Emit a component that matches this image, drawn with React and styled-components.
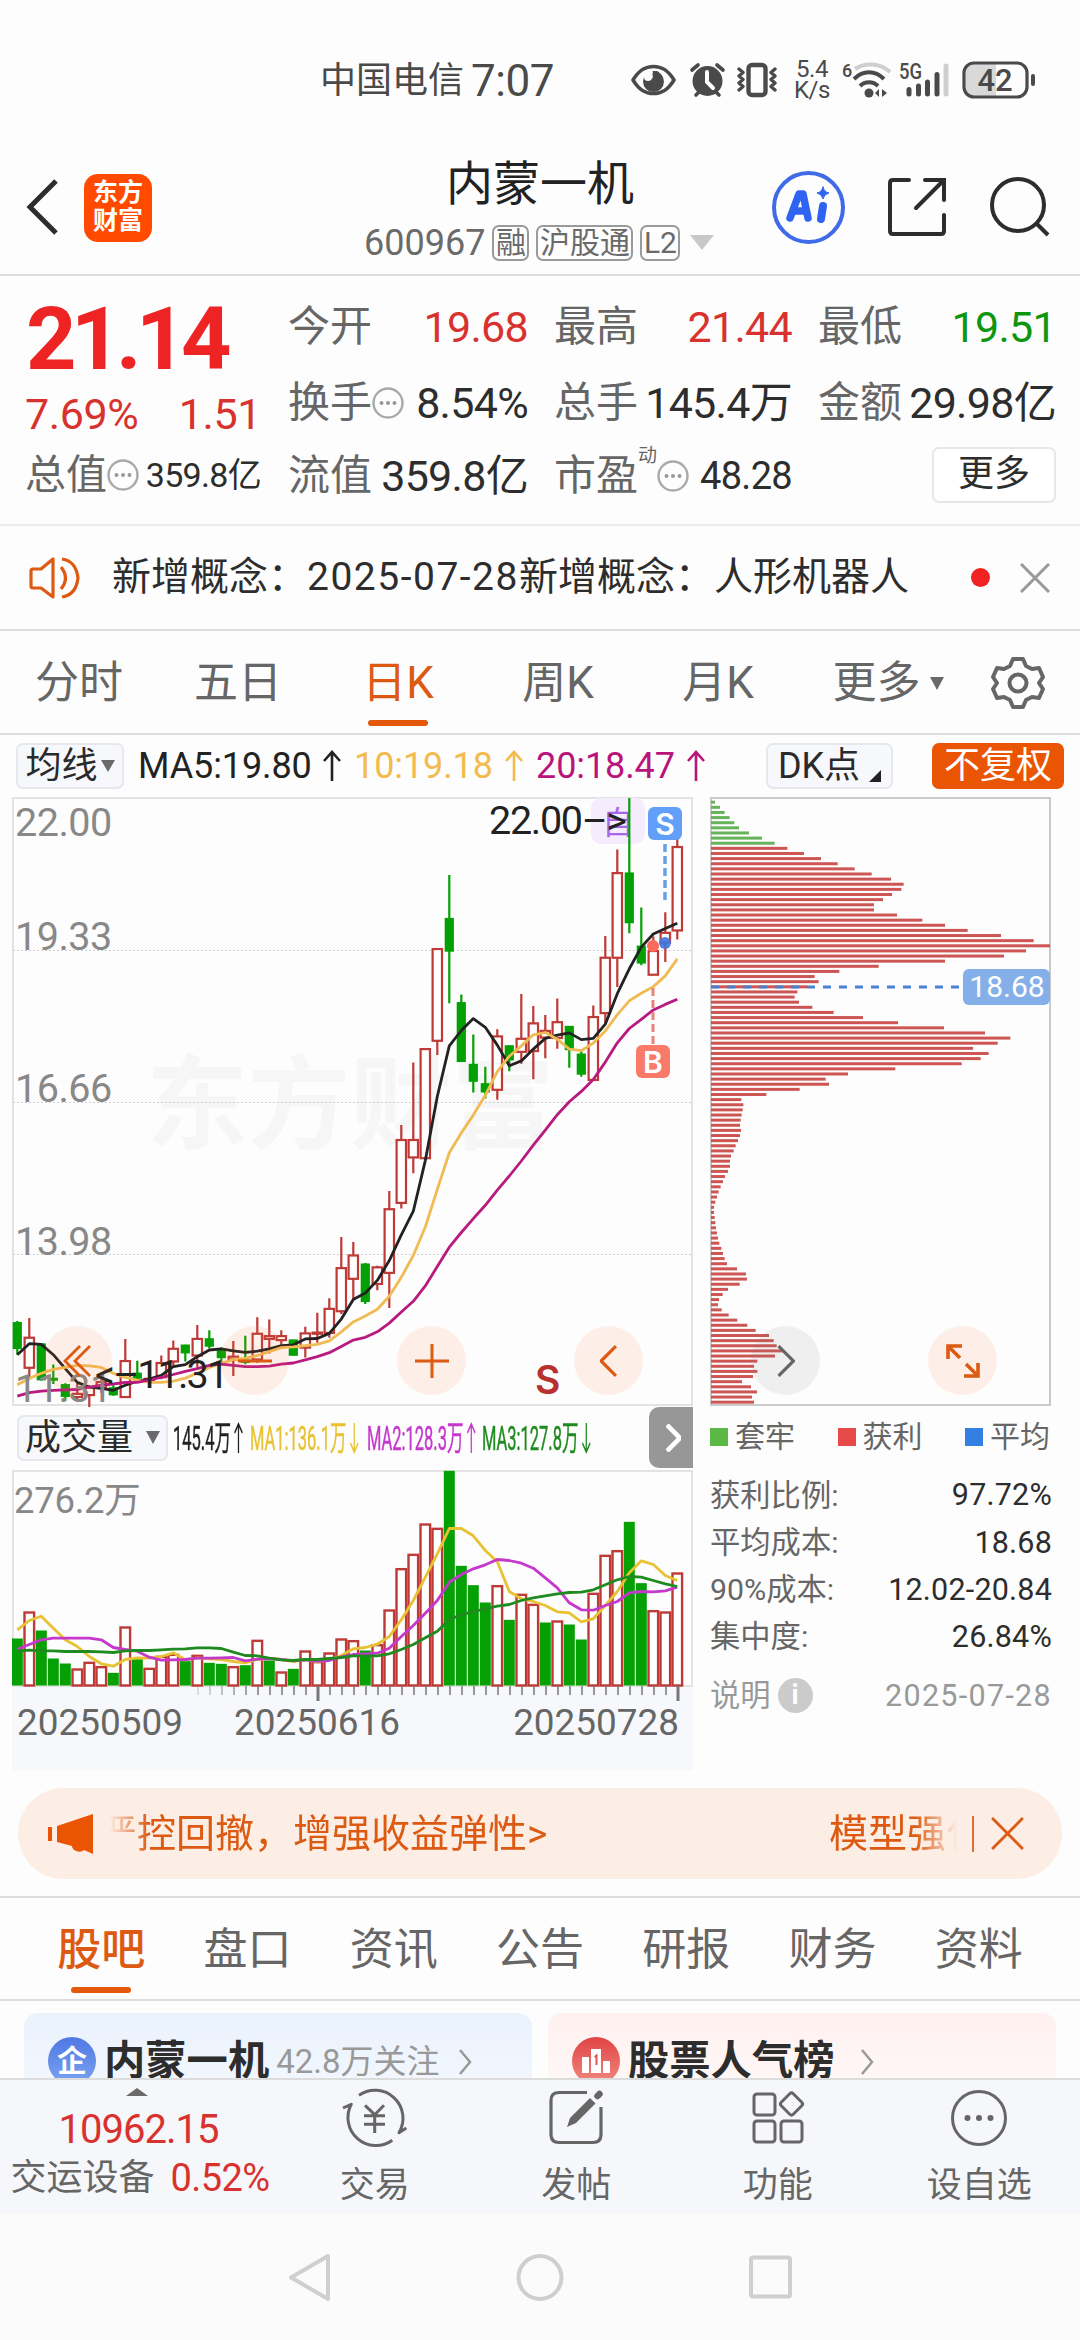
import styled, { createGlobalStyle, css } from 'styled-components';

const GlobalStyle = createGlobalStyle`
  * {
    box-sizing: border-box;
  }

  body {
    margin: 0;
    background: #fdfdfd;
    color: #2d2d2d;
    font-family: Roboto, 'Noto Sans CJK SC', sans-serif;
    line-height: 1;
  }

  svg {
    display: block;
    flex-shrink: 0;
  }
`;

const RED = '#d8322f';
const CANDLE_RED = '#bd3a37';
const GREEN = '#04a004';
const ORANGE = '#dc5a12';

/* ---------- chart data ---------- */

// [direction, high, body top, body bottom, low]
const candles = [
  ['g', 1343, 1348, 1411, 1428], ['r', 1335, 1385, 1461, 1490], ['g', 1402, 1402, 1490, 1494],
  ['g', 1453, 1489, 1491, 1502], ['g', 1500, 1505, 1532, 1545], ['r', 1500, 1527, 1535, 1545],
  ['r', 1505, 1510, 1530, 1560], ['r', 1490, 1497, 1512, 1525], ['g', 1505, 1513, 1528, 1532],
  ['r', 1388, 1444, 1535, 1537], ['g', 1443, 1476, 1486, 1490], ['r', 1475, 1489, 1492, 1510],
  ['r', 1430, 1449, 1485, 1490], ['r', 1392, 1413, 1445, 1455], ['g', 1403, 1405, 1422, 1445],
  ['r', 1353, 1388, 1430, 1460], ['g', 1366, 1389, 1405, 1412], ['g', 1410, 1418, 1434, 1450],
  ['r', 1393, 1433, 1440, 1482], ['g', 1380, 1443, 1446, 1452], ['r', 1333, 1375, 1440, 1448],
  ['r', 1339, 1381, 1388, 1425], ['r', 1366, 1381, 1391, 1405], ['g', 1390, 1392, 1428, 1430],
  ['r', 1357, 1374, 1410, 1435], ['r', 1322, 1372, 1375, 1398], ['r', 1285, 1312, 1373, 1385],
  ['r', 1130, 1209, 1318, 1325], ['r', 1143, 1177, 1236, 1288], ['g', 1196, 1200, 1292, 1300],
  ['r', 1203, 1207, 1249, 1265], ['r', 1014, 1060, 1221, 1310], ['r', 847, 885, 1044, 1058],
  ['r', 689, 885, 929, 969], ['r', 655, 655, 931, 931], ['r', 402, 402, 634, 670],
  ['g', 215, 326, 406, 539], ['g', 517, 539, 685, 687], ['g', 618, 695, 735, 765],
  ['g', 700, 744, 762, 780], ['r', 605, 623, 758, 783], ['g', 646, 648, 681, 711],
  ['r', 516, 629, 662, 692], ['r', 546, 590, 660, 731], ['r', 569, 609, 626, 678],
  ['r', 527, 587, 627, 654], ['g', 597, 599, 655, 702], ['g', 655, 669, 717, 725],
  ['r', 545, 574, 733, 735], ['r', 369, 424, 564, 590], ['r', 150, 210, 424, 498],
  ['g', 20, 211, 334, 362], ['g', 297, 396, 436, 443], ['r', 370, 407, 467, 467],
  ['r', 309, 361, 386, 435], ['r', 105, 144, 355, 378],
];

const ma5 = [
  1428, 1400, 1402, 1428, 1463, 1498, 1510, 1513, 1518, 1505, 1495, 1490, 1480, 1458, 1453, 1433,
  1416, 1413, 1418, 1422, 1419, 1413, 1405, 1403, 1388, 1387, 1374, 1338, 1288, 1272, 1240, 1190,
  1125, 1065, 937, 775, 647, 608, 578, 600, 645, 697, 685, 655, 628, 620, 614, 631, 628, 592, 515,
  452, 397, 364, 350, 337,
];
const ma10 = [
  1504, 1488, 1475, 1465, 1460, 1455, 1456, 1460, 1475, 1485, 1492, 1498, 1498, 1495, 1487, 1475,
  1460, 1450, 1440, 1437, 1430, 1420, 1410, 1408, 1405, 1402, 1393, 1370, 1345, 1330, 1313, 1280,
  1232, 1177, 1105, 1010, 917, 867, 822, 772, 712, 673, 647, 619, 613, 630, 655, 659, 640, 609,
  568, 533, 514, 497, 470, 427,
];
const ma20 = [
  1533, 1524, 1520, 1518, 1517, 1516, 1510, 1505, 1502, 1498, 1498, 1492, 1485, 1478, 1470, 1463,
  1455, 1452, 1455, 1458, 1458, 1457, 1452, 1449, 1441, 1433, 1423, 1407, 1391, 1384, 1370, 1348,
  1320, 1293, 1254, 1205, 1156, 1119, 1084, 1050, 1012, 976, 938, 898, 860, 821, 788, 762, 732,
  688, 639, 603, 580, 556, 542, 529,
];

// bar tops, negative = falling day
const volumes = [
  -714, 633, -690, -774, -789, 804, 784, 797, -817, 678, -776, 802, 766, 760, -782, 763, -787,
  -790, 797, -794, 718, -780, 813, -805, 750, 782, 756, 714, 719, -750, 731, 627, 503, 460, 369,
  382, -211, -496, -554, -606, 554, -658, 580, 610, -666, 660, -672, -717, 577, 463, 449, -364,
  -548, 629, 633, 516,
];
const vma1 = [
  688, 660, 647, 683, 718, 738, 768, 790, 797, 777, 772, 773, 768, 757, 778, 772, 775, 777, 783,
  787, 777, 774, 777, 783, 777, 783, 777, 765, 745, 741, 731, 708, 658, 600, 530, 460, 384, 384,
  406, 450, 484, 573, 595, 603, 615, 634, 637, 664, 655, 615, 573, 517, 481, 492, 525, 540,
];
const vma2 = [
  746, 732, 718, 713, 713, 713, 713, 718, 741, 747, 752, 770, 779, 778, 777, 773, 773, 772, 771,
  781, 776, 774, 777, 781, 778, 782, 780, 769, 762, 760, 758, 743, 708, 675, 638, 600, 545, 522,
  505, 493, 477, 480, 488, 503, 532, 562, 607, 628, 629, 615, 603, 577, 573, 574, 571, 560,
];
const vma3 = [
  752, 749, 751, 751, 753, 753, 753, 754, 756, 751, 750, 750, 748, 746, 745, 742, 742, 744, 755,
  765, 766, 773, 778, 780, 777, 777, 774, 771, 766, 766, 766, 760, 747, 732, 712, 692, 657, 643,
  633, 625, 617, 612, 600, 592, 586, 580, 576, 575, 568, 553, 538, 528, 530, 540, 550, 558,
];

const chips = [
  12, 27, 41, 56, 70, 84, 114, 153, 191, 229, 279, 330, 380, 431, 482, 540, 578, 571, 543, 516,
  489, 489, 558, 634, 702, 770, 870, 968, 1017, 945, 879, 702, 503, 385, 311, 323, 289, 259, 251,
  264, 304, 368, 456, 561, 699, 822, 898, 860, 786, 833, 809, 752, 553, 411, 344, 354, 266, 166,
  91, 97, 95, 92, 89, 87, 90, 87, 81, 74, 68, 60, 57, 57, 51, 42, 36, 29, 23, 18, 13, 9, 9, 11,
  13, 15, 18, 21, 25, 31, 36, 41, 48, 78, 105, 108, 86, 51, 35, 24, 21, 32, 53, 79, 109, 134, 174,
  188, 197, 215, 192, 139, 129, 139, 126, 93, 120, 138, 123, 129,
];

const xAt = (i) => 5.3 + i * 12;
const priceY = (v) => (v - 20) * 0.3954 + 1;
const volY = (v) => (v - 210) / 3 + 0.5;
const line = (values, y) => values.map((v, i) => `${xAt(i)},${y(v).toFixed(1)}`).join(' ');

/* ---------- status bar ---------- */

const Page = styled.div`
  width: 1080px;
  height: 2340px;
  overflow: hidden;
  display: flex;
  flex-direction: column;
  background: #fdfdfd;
`;

const StatusBar = styled.div`
  height: 105px;
  padding: 57px 44px 0 320px;
  display: flex;
  align-items: flex-start;
  color: #4a4a4a;
`;

const Carrier = styled.span`
  font-size: 36px;
  line-height: 48px;
  width: 155px;
`;

const Clock = styled.span`
  font-size: 44px;
  line-height: 48px;
  letter-spacing: -0.5px;
  width: 164px;
`;

const StatusIcons = styled.div`
  display: flex;
  align-items: center;
  height: 48px;
  margin-top: -1px;
`;

const NetSpeed = styled.div`
  width: 36px;
  margin: 0 12px 0 16px;
  font-size: 24px;
  line-height: 21px;
  text-align: center;
  letter-spacing: -0.5px;
`;

const StatusGlyph = styled.svg`
  margin-right: ${({ $gap }) => $gap || 0}px;
`;

/* ---------- header ---------- */

const Header = styled.header`
  height: 171px;
  padding: 0 29px 0 26px;
  display: flex;
  align-items: center;
  border-bottom: 2px solid #dcdcdc;
`;

const BackIcon = styled.svg`
  margin-top: 35px;
`;

const AppLogo = styled.div`
  width: 68px;
  height: 68px;
  margin: 69px 0 0 24px;
  align-self: flex-start;
  border-radius: 14px;
  background: #ff4a00;
  color: #fff;
  font-weight: 700;
  font-size: 25px;
  line-height: 28px;
  padding-top: 5px;
  text-align: center;
`;

const TitleBlock = styled.div`
  flex: 1;
  padding: 46px 0 0 212px;
  display: flex;
  flex-direction: column;
`;

const StockName = styled.h1`
  margin: 0;
  padding-left: 82px;
  font-size: 47px;
  line-height: 60px;
  font-weight: 400;
  color: #222;
`;

const CodeRow = styled.div`
  display: flex;
  align-items: center;
  height: 58px;
  font-size: 36px;
  color: #6a6a6a;
`;

const Tag = styled.span`
  height: 36px;
  margin-left: 7px;
  padding: 0 1.5px;
  border: 2px solid #9a9a9a;
  border-radius: 7px;
  font-size: 30px;
  line-height: 31px;
`;

const Caret = styled.i`
  width: 0;
  height: 0;
  margin-left: ${({ $gap }) => $gap || 0}px;
  border-left: ${({ $w }) => $w}px solid transparent;
  border-right: ${({ $w }) => $w}px solid transparent;
  border-top: ${({ $h }) => $h}px solid ${({ $color }) => $color || '#6a6a6a'};
`;

const HeaderActions = styled.div`
  display: flex;
  align-items: center;
  gap: 42px;
  padding-top: 35px;
`;

const AiBadge = styled.div`
  width: 73px;
  height: 73px;
  border: 4px solid #3f6ae8;
  border-radius: 50%;
`;

/* ---------- quote ---------- */

const Quote = styled.section`
  height: 250px;
  padding: 0 24px 0 26px;
  display: flex;
  border-bottom: 2px solid #ececec;
`;

const PriceColumn = styled.div`
  width: 236px;
  margin-right: 27px;
  padding-top: 17px;
`;

const Price = styled.div`
  height: 90px;
  font-size: 88px;
  line-height: 92px;
  font-weight: 700;
  letter-spacing: -5.5px;
  color: #ee2424;
`;

const ChangeRow = styled.div`
  display: flex;
  justify-content: space-between;
  height: 57px;
  line-height: 62px;
  font-size: 43px;
  letter-spacing: -0.4px;
  margin-left: -1px;
  color: ${RED};
`;

const QuoteGrid = styled.div`
  flex: 1;
  display: grid;
  grid-template-columns: 240px 238px 238px;
  grid-template-rows: 76px 76px 70px;
  column-gap: 26px;
  padding-top: 13px;
`;

const Cell = styled.div`
  display: flex;
  align-items: center;
  height: ${({ $h }) => ($h ? `${$h}px` : 'auto')};
`;

const Label = styled.span`
  font-size: ${({ $size }) => $size || 42}px;
  margin-left: ${({ $shift }) => $shift || 0}px;
  color: #666;
`;

const Value = styled.span`
  margin-left: auto;
  font-size: ${({ $size }) => $size || 43}px;
  letter-spacing: -0.7px;
  white-space: nowrap;
  color: ${({ $color }) => $color || '#2d2d2d'};
`;

const Sup = styled.sup`
  align-self: flex-start;
  margin-top: 5px;
  font-size: 19px;
  line-height: 20px;
  color: #666;
`;

const MoreButton = styled.button`
  width: 124px;
  height: 56px;
  margin: -2px 0 0 auto;
  padding: 0 0 2px;
  border: 2px solid #e6e7ea;
  border-radius: 7px;
  background: #fff;
  font: inherit;
  font-size: 36px;
  color: #2d2d2d;
`;

/* ---------- notice ---------- */

const Notice = styled.section`
  height: 105px;
  padding: 0 30px 0 28px;
  display: flex;
  align-items: center;
  border-bottom: 2px solid #dcdcdc;
`;

const NoticeText = styled.p`
  flex: 1;
  margin: 0 0 0 31px;
  font-size: 39px;
  white-space: nowrap;

  time {
    letter-spacing: 1.5px;
  }
`;

const RedDot = styled.i`
  width: 19px;
  height: 19px;
  margin-right: 30px;
  border-radius: 50%;
  background: #f02222;
`;

/* ---------- tabs ---------- */

const Tabs = styled.nav`
  height: 104px;
  display: flex;
  border-bottom: 2px solid #dcdcdc;
`;

const Tab = styled.a`
  position: relative;
  width: ${({ $w }) => $w}px;
  height: 102px;
  padding-top: 2px;
  display: flex;
  align-items: center;
  justify-content: center;
  font-size: 44px;
  color: ${({ $active }) => ($active ? ORANGE : '#666')};
  font-weight: ${({ $bold }) => ($bold ? 500 : 400)};

  ${({ $active }) =>
    $active &&
    css`
      &::after {
        content: '';
        position: absolute;
        bottom: 7px;
        left: calc(50% - 30px);
        width: 60px;
        height: 6px;
        border-radius: 3px;
        background: #e4580c;
      }
    `}
`;

/* ---------- indicator toolbar ---------- */

const IndicatorBar = styled.div`
  height: 62px;
  padding: 8px 16px 0;
  display: flex;
  align-items: flex-start;
`;

const Picker = styled.button`
  width: ${({ $w }) => $w}px;
  height: 46px;
  margin-left: ${({ $gap }) => $gap || 0}px;
  padding: 0;
  display: flex;
  align-items: center;
  justify-content: center;
  border: 2px solid #e6e8ed;
  border-radius: 7px;
  background: #f7f8fb;
  font: inherit;
  font-size: 36px;
  color: #2a2a2a;
`;

const MaValue = styled.span`
  width: ${({ $w }) => $w}px;
  margin-left: ${({ $gap }) => $gap}px;
  display: flex;
  align-items: center;
  height: 46px;
  font-size: 36px;
  white-space: nowrap;
  letter-spacing: -0.1px;
  color: ${({ $color }) => $color};

  svg {
    margin-left: auto;
  }
`;

const CornerMark = styled.i`
  align-self: flex-end;
  margin: 0 0 5px 9px;
  border-left: 12px solid transparent;
  border-bottom: 12px solid #222;
`;

const AdjustButton = styled(Picker)`
  margin-left: auto;
  border: 0;
  background: #ea5504;
  color: #fff;
`;

/* ---------- charts ---------- */

const Charts = styled.section`
  height: 973px;
  padding: 0 28px 0 12px;
  display: flex;
  justify-content: space-between;
`;

const KlineColumn = styled.div`
  position: relative;
  width: 681px;
`;

const ChipColumn = styled.div`
  position: relative;
  width: 342px;
`;

const FloatingButtons = styled.div`
  position: absolute;
  top: 529px;
  left: ${({ $left }) => $left}px;
  display: flex;
  gap: 108px;
`;

const RoundButton = styled.span`
  width: 69px;
  height: 69px;
  display: grid;
  place-items: center;
  border-radius: 50%;
  background: ${({ $grey }) => ($grey ? 'rgba(120, 120, 120, 0.1)' : 'rgba(255, 115, 50, 0.1)')};
`;

const VolumeBar = styled.div`
  height: 63px;
  display: flex;
  align-items: center;
  padding: 0 0 2px 5px;
`;

const VolumeValue = styled.span`
  width: ${({ $w }) => $w}px;
  margin-left: 7px;
  font-size: 34px;
  white-space: nowrap;
  color: ${({ $color }) => $color};

  &:nth-of-type(1) {
    margin-left: 5px;
  }

  span {
    display: inline-flex;
    align-items: center;
    transform: scaleX(0.485);
    transform-origin: left;
    -webkit-text-stroke: 0.5px currentColor;
  }

  svg {
    margin-left: 6px;
  }
`;

const NextPane = styled.button`
  width: 44px;
  height: 61px;
  margin-left: auto;
  padding: 0 0 0 4px;
  display: grid;
  place-items: center;
  border: 0;
  border-radius: 10px 0 0 10px;
  background: #979797;
`;

const DateAxis = styled.div`
  height: 84px;
  margin-top: -2px;
  background: #f7f8fb;
  font-size: 36.9px;
  color: #666;
`;

const Dates = styled.div`
  display: grid;
  grid-template-columns: 217px 1fr auto;
  padding: 3px 14px 0 5px;
`;

const Legend = styled.div`
  display: flex;
  justify-content: space-between;
  align-items: center;
  height: 60px;
  padding-right: 2px;
  margin-bottom: 5px;
`;

const LegendItem = styled.span`
  display: flex;
  align-items: center;
  gap: 7px;
  font-size: 30px;
  color: #666;

  &::before {
    content: '';
    width: 18px;
    height: 18px;
    background: ${({ $color }) => $color};
  }
`;

const StatRow = styled.div`
  height: 47.3px;
  display: flex;
  align-items: center;
  justify-content: space-between;
  font-size: 30.3px;
  color: ${({ $muted }) => ($muted ? '#999' : '#666')};
  margin-top: ${({ $muted }) => ($muted ? 11 : 0)}px;

  b {
    font-weight: 400;
    font-size: 30.5px;
    letter-spacing: ${({ $muted }) => ($muted ? 1.3 : 0.2)}px;
    color: ${({ $muted }) => ($muted ? '#999' : '#2d2d2d')};
  }
`;

const StatLabel = styled.span`
  display: flex;
  align-items: center;
  gap: 7px;
`;

const InfoDot = styled.i`
  width: 35px;
  height: 35px;
  border-radius: 50%;
  background: #cbcbcb;
  color: #fff;
  font: 700 27px/35px Roboto, sans-serif;
  text-align: center;
`;

/* ---------- promo banner ---------- */

const Banner = styled.div`
  height: 91px;
  margin: 18px 18px 17px;
  padding: 0 37px 0 29px;
  display: flex;
  align-items: center;
  border-radius: 46px;
  background: #fceee5;
  color: ${ORANGE};
`;

const Marquee = styled.div`
  width: 848px;
  margin-left: 15px;
  display: flex;
  justify-content: space-between;
  overflow: hidden;
  font-size: 39px;
  line-height: 50px;
  white-space: nowrap;
  mask-image: linear-gradient(90deg, transparent, #000 40px, #000 calc(100% - 42px), transparent);

  span:first-child {
    margin-left: -11px;
  }

  span:last-child {
    margin-right: -28px;
  }
`;

const BannerRule = styled.i`
  width: 2px;
  height: 36px;
  margin: 0 17px 0 15px;
  background: #dd7038;
`;

/* ---------- cards ---------- */

const SectionTabs = styled(Tabs)`
  height: 105px;
  padding: 0 28px;
  border-top: 2px solid #dcdcdc;
`;

const Cards = styled.section`
  height: 77px;
  padding: 12px 24px 0;
  display: flex;
  gap: 16px;
  overflow: hidden;
`;

const Card = styled.div`
  flex: 1;
  height: 110px;
  padding: 24px 24px 0;
  display: flex;
  align-items: flex-start;
  border-radius: 14px;
  background: ${({ $tone }) =>
    $tone === 'blue'
      ? 'linear-gradient(#eaf2fc, #f7fafe)'
      : 'linear-gradient(#fef1f0, #fffafa)'};
`;

const CardTitle = styled.strong`
  margin-left: 8px;
  font-size: 41.3px;
  line-height: 48px;
  font-weight: 700;
`;

const CardNote = styled.span`
  margin-left: 7px;
  font-size: 33px;
  line-height: 50px;
  color: #999;
`;

const CardArrow = styled.svg`
  margin: 11px 0 0 ${({ $gap }) => $gap}px;
`;

const CardIcon = styled.span`
  width: 48px;
  height: 48px;
  display: grid;
  place-items: center;
  border-radius: 50%;
  background: ${({ $bg }) => $bg};
  color: #fff;
  font-size: 30px;
  font-weight: 700;
`;

/* ---------- bottom ---------- */

const BottomBar = styled.footer`
  height: 135px;
  display: flex;
  border-top: 2px solid #dcdcdc;
  background: #f6f7fa;
`;

const IndexBlock = styled.div`
  width: 274px;
  display: flex;
  flex-direction: column;
  align-items: center;
`;

const IndexArrow = styled.i`
  margin-top: 8px;
  border-left: 11px solid transparent;
  border-right: 11px solid transparent;
  border-bottom: 8px solid #6a6a6a;
`;

const IndexValue = styled.div`
  margin: 10px 0 0 3px;
  font-size: 40px;
  line-height: 48px;
  letter-spacing: -1px;
  color: ${RED};
`;

const IndexRow = styled.div`
  width: 259px;
  margin: -1px 0 0 6px;
  display: flex;
  justify-content: space-between;
  font-size: 36px;
  line-height: 50px;
  color: #666;
  white-space: nowrap;

  span {
    font-size: 38px;
    letter-spacing: -0.6px;
    color: ${RED};
  }
`;

const BottomItem = styled.a`
  width: 201.5px;
  padding-top: 8px;
  display: flex;
  flex-direction: column;
  align-items: center;
  font-size: 35px;
  line-height: 50px;
  color: #666;

  svg {
    margin-bottom: 13px;
  }
`;

const NavBar = styled.div`
  flex: 1;
  display: flex;
  justify-content: center;
  padding-top: 40px;
  gap: 184px;
  background: #fbfbfb;
`;

/* ---------- small drawings ---------- */

const Arrow = ({ down }) => (
  <svg width="20" height="34" viewBox="0 0 20 34" fill="none" stroke="currentColor" strokeWidth="2.6">
    {down ? <path d="M10 2v29M2 22l8 9 8-9" /> : <path d="M10 32V3M2 12l8-9 8 9" />}
  </svg>
);

const Dots = () => (
  <svg width="32" height="32" viewBox="0 0 32 32">
    <circle cx="16" cy="16" r="14.5" fill="none" stroke="#a9a9a9" strokeWidth="2.4" />
    {[9.5, 16, 22.5].map((x) => (
      <circle key={x} cx={x} cy="16" r="2" fill="#999" />
    ))}
  </svg>
);

const Cross = ({ size, width = 3, color }) => (
  <svg width={size} height={size} viewBox="0 0 30 30" stroke={color} strokeWidth={width}>
    <path d="M1 1l28 28M29 1L1 29" />
  </svg>
);

const Chevron = ({ w, h, color, stroke = 3, left }) => (
  <svg width={w} height={h} viewBox="0 0 16 30" fill="none" stroke={color} strokeWidth={stroke}>
    <path d={left ? 'M15 1L1 15l14 14' : 'M1 1l14 14L1 29'} />
  </svg>
);

function StatusSection() {
  return (
    <StatusBar>
      <Carrier>中国电信</Carrier>
      <Clock>7:07</Clock>
      <StatusIcons>
        <StatusGlyph $gap={13} width="45" height="34" viewBox="0 0 45 34">
          <path d="M2 17C8 7 14 3.500 22.500 3.500S37 7 43 17C37 27 31 30.500 22.500 30.500S8 27 2 17z" fill="none" stroke="#4a4a4a" strokeWidth="3.600" strokeLinejoin="round" />
          <circle cx="22.500" cy="18.500" r="10.500" fill="#4a4a4a" />
          <path d="M10 14c2-5 6-7 11-7 3 6 0 11-4 11-2 0-4-1-4-4z" fill="#fdfdfd" />
          <circle cx="25" cy="11.500" r="3.500" fill="#4a4a4a" />
        </StatusGlyph>
        <StatusGlyph $gap={10} width="37" height="36" viewBox="0 0 37 36">
          <circle cx="18.500" cy="19" r="15" fill="#4a4a4a" />
          <path d="M3 8l6-5M34 8l-6-5M7 33l4-4M30 33l-4-4" stroke="#4a4a4a" strokeWidth="3.600" strokeLinecap="round" />
          <path d="M18 10v10l6 6" fill="none" stroke="#fff" strokeWidth="4" strokeLinecap="round" />
        </StatusGlyph>
        <svg width="42" height="36" viewBox="0 0 42 36" fill="none" stroke="#4a4a4a">
          <rect x="12.500" y="3" width="17" height="30" rx="3.500" strokeWidth="4.400" />
          <path d="M3 7l4 3.500-4 3.500 4 3.500-4 3.500 4 3.500-4 3.500M39 7l-4 3.500 4 3.500-4 3.500 4 3.500-4 3.500 4 3.500" strokeWidth="3.400" strokeLinejoin="round" strokeLinecap="round" />
        </svg>
        <NetSpeed>
          5.4
          <br />
          K/s
        </NetSpeed>
        <StatusGlyph $gap={8} width="49" height="38" viewBox="0 0 49 38" fill="none" stroke="#4a4a4a" strokeWidth="4">
          <text x="0" y="16" fontSize="18" fontWeight="500" fill="#4a4a4a" stroke="none">6</text>
          <path d="M13 8c10-7 25-6 35 3" stroke="#cfcfcf" strokeWidth="4" />
          <path d="M12 18c9-9 21-9 30 0M18 25c5-5 13-5 18 0" />
          <circle cx="27" cy="32" r="4.500" fill="#4a4a4a" stroke="none" />
          <path d="M37 28v8l-4-4zM40 28v8l5-4z" fill="#4a4a4a" stroke="none" />
        </StatusGlyph>
        <StatusGlyph $gap={12} width="51" height="38" viewBox="0 0 51 38" stroke="#4a4a4a" strokeWidth="5" strokeLinecap="round">
          <text x="0" y="18" fontSize="22" fontWeight="500" fill="#4a4a4a" stroke="none" textLength="23" lengthAdjust="spacingAndGlyphs">5G</text>
          <path d="M10 28.500v4.500M19.500 25v8M28.500 21v12M38 13.500v19.500" />
          <path d="M47 5v28" stroke="#cfcfcf" />
        </StatusGlyph>
        <svg width="74" height="38" viewBox="0 0 74 38">
          <rect x="4" y="3" width="30" height="32" fill="#d9d9d9" />
          <rect x="2" y="2" width="63" height="34" rx="10" fill="none" stroke="#4a4a4a" strokeWidth="3.200" />
          <rect x="69" y="13" width="4" height="12" rx="2" fill="#4a4a4a" />
          <text x="33" y="30" fontSize="31" fontWeight="500" fill="#4a4a4a" textAnchor="middle">42</text>
        </svg>
      </StatusIcons>
    </StatusBar>
  );
}

function HeaderSection() {
  return (
    <Header>
      <BackIcon width="34" height="56" viewBox="0 0 34 56" fill="none" stroke="#2d2d2d" strokeWidth="5">
        <path d="M30 2L4 28l26 26" />
      </BackIcon>
      <AppLogo>
        东方
        <br />
        财富
      </AppLogo>
      <TitleBlock>
        <StockName>内蒙一机</StockName>
        <CodeRow>
          600967
          <Tag>融</Tag>
          <Tag>沪股通</Tag>
          <Tag>L2</Tag>
          <Caret $w={12} $h={15} $gap={10} $color="#c8c8c8" />
        </CodeRow>
      </TitleBlock>
      <HeaderActions>
        <AiBadge>
          <svg width="65" height="65" viewBox="0 0 65 65" fill="none" stroke="#2f63f2" strokeWidth="7.500" strokeLinecap="round" strokeLinejoin="round">
            <path d="M14 43l9-24h4l5 24M19 36h11" />
            <path d="M47 31l-2 13" strokeWidth="8" />
            <path d="M47 12q1 5 6 6-5 1-6 6-1-5-6-6 5-1 6-6z" fill="#2f63f2" strokeWidth="1" />
          </svg>
        </AiBadge>
        <svg width="60" height="60" viewBox="0 0 60 60" fill="none" stroke="#2d2d2d" strokeWidth="4" strokeLinecap="round">
          <path d="M22 3H6Q3 3 3 6v48q0 3 3 3h48q3 0 3-3V38M38 3h19v20M57 3L29 31" />
        </svg>
        <svg width="62" height="62" viewBox="0 0 62 62" fill="none" stroke="#2d2d2d" strokeWidth="4">
          <circle cx="29" cy="29" r="26" />
          <path d="M47 47l12 12" />
        </svg>
      </HeaderActions>
    </Header>
  );
}

function QuoteSection() {
  return (
    <Quote>
      <PriceColumn>
        <Price>21.14</Price>
        <ChangeRow>
          <span>7.69%</span>
          <span>1.51</span>
        </ChangeRow>
        <Cell $h={70}>
          <Label $size={41} $shift={-1}>总值</Label>
          <Dots />
          <Value $size={34}>359.8亿</Value>
        </Cell>
      </PriceColumn>
      <QuoteGrid>
        <Cell>
          <Label>今开</Label>
          <Value $color={RED}>19.68</Value>
        </Cell>
        <Cell>
          <Label>最高</Label>
          <Value $color={RED}>21.44</Value>
        </Cell>
        <Cell>
          <Label>最低</Label>
          <Value $color="#0f960f">19.51</Value>
        </Cell>
        <Cell>
          <Label>换手</Label>
          <Dots />
          <Value>8.54%</Value>
        </Cell>
        <Cell>
          <Label>总手</Label>
          <Value>145.4万</Value>
        </Cell>
        <Cell>
          <Label>金额</Label>
          <Value>29.98亿</Value>
        </Cell>
        <Cell>
          <Label>流值</Label>
          <Value>359.8亿</Value>
        </Cell>
        <Cell>
          <Label>市盈</Label>
          <Sup>动</Sup>
          <Dots />
          <Value $size={38}>48.28</Value>
        </Cell>
        <Cell>
          <MoreButton>更多</MoreButton>
        </Cell>
      </QuoteGrid>
    </Quote>
  );
}

function NoticeSection() {
  return (
    <Notice>
      <svg width="53" height="44" viewBox="0 0 53 44" fill="none" stroke={ORANGE} strokeWidth="3.200" strokeLinejoin="round">
        <path d="M3 15q0-2 2-2h8L25 3v38L13 32H5q-2 0-2-2zM33 11q9 11 0 22M34 3q14 2 16 19-2 17-16 19" />
      </svg>
      <NoticeText>
        新增概念：<time>2025-07-28</time>新增概念：人形机器人
      </NoticeText>
      <RedDot />
      <Cross size={30} color="#999" />
    </Notice>
  );
}

function PeriodTabs() {
  return (
    <Tabs>
      <Tab $w={158}>分时</Tab>
      <Tab $w={160}>五日</Tab>
      <Tab $w={160} $active>日K</Tab>
      <Tab $w={160}>周K</Tab>
      <Tab $w={160}>月K</Tab>
      <Tab $w={180}>
        更多
        <Caret $w={7.5} $h={13} $gap={9} />
      </Tab>
      <Tab $w={80}>
        <svg width="54" height="54" viewBox="0 0 54 54" fill="none" stroke="#666" strokeWidth="4" strokeLinejoin="round">
          <path d="M22 3h10l3 7 6 3 7-1 4 9-4 6 4 6-4 9-7-1-6 3-3 7H22l-3-7-6-3-7 1-4-9 4-6-4-6 4-9 7 1 6-3z" />
          <circle cx="27" cy="27" r="8.500" />
        </svg>
      </Tab>
    </Tabs>
  );
}

function KlineChart() {
  return (
    <svg width="681" height="610" viewBox="0 0 681 610">
      <g fill="#f6f6f6" fontSize="102" fontWeight="700">
        <text x="134" y="344">东方财富</text>
      </g>
      <rect x="1" y="1" width="679" height="607" fill="none" stroke="#e3e3e3" strokeWidth="2" />
      <g stroke="#cfcfcf" strokeDasharray="2 2">
        <path d="M1 153.500h679M1 305.500h679M1 457.500h679" />
      </g>
      <rect x="579" y="1" width="54" height="46" rx="10" fill="#f5ecfe" />
      <text x="606" y="37" fontSize="32" fill="#a866ea" textAnchor="middle">自</text>
      {candles.map(([dir, high, top, bottom, low], i) => {
        const x = xAt(i);
        const color = dir === 'g' ? GREEN : CANDLE_RED;
        return (
          <g key={i} stroke={color} strokeWidth="2.2">
            <path d={`M${x} ${priceY(high)}V${priceY(top)}M${x} ${priceY(bottom)}V${priceY(low)}`} />
            <rect
              x={x - (dir === 'g' ? 3.5 : 4.7)}
              y={priceY(top)}
              width={dir === 'g' ? 7 : 9.4}
              height={(bottom - top) * 0.3954}
              fill={dir === 'g' ? color : '#fff'}
            />
          </g>
        );
      })}
      <g fill="none" strokeWidth="2.800" strokeLinejoin="round">
        <polyline points={line(ma5, priceY)} stroke="#222" />
        <polyline points={line(ma10, priceY)} stroke="#f0bb52" />
        <polyline points={line(ma20, priceY)} stroke="#b81a80" />
      </g>
      <g fill="#888" fontSize="39.500" letterSpacing="-0.5">
        <text x="3" y="39">22.00</text>
        <text x="3" y="153">19.33</text>
        <text x="3" y="305">16.66</text>
        <text x="3" y="458">13.98</text>
        <text x="3" y="605">11.31</text>
      </g>
      <circle cx="641" cy="149" r="6" fill="#fb6a5c" />
      <circle cx="653" cy="146" r="6" fill="#3f74dd" opacity="0.9" />
      <path d="M653 47v57" stroke="#6a9fe6" strokeWidth="3.500" strokeDasharray="8 4" />
      <path d="M641 191v56" stroke="#e8837b" strokeWidth="3" strokeDasharray="8 4" />
      <rect x="636" y="10" width="34" height="33" rx="6" fill="#629ff8" />
      <rect x="624" y="248" width="34" height="33" rx="6" fill="#fa7a6a" />
      <g fill="#fff" fontFamily="Inter, sans-serif" fontSize="30" fontWeight="600" textAnchor="middle">
        <text x="653" y="38">S</text>
        <text x="641" y="276">B</text>
      </g>
      <g fill="#222" fontSize="39.500">
        <text x="477" y="37" textLength="138">22.00–&gt;</text>
        <text x="83" y="591" textLength="134">&lt;–11.31</text>
      </g>
      <text x="523" y="597" fontSize="39" fontWeight="600" fontFamily="Inter, sans-serif" fill="#b8312f">S</text>
    </svg>
  );
}

function VolumeChart() {
  return (
    <svg width="681" height="218" viewBox="0 0 681 218">
      <rect x="1" y="1" width="679" height="215" fill="none" stroke="#e3e3e3" strokeWidth="2" />
      <text x="2" y="43" fontSize="36.500" letterSpacing="-0.3" fill="#888">276.2万</text>
      {volumes.map((v, i) => {
        const down = v < 0;
        const y = volY(Math.abs(v));
        return (
          <rect
            key={i}
            x={xAt(i) - (down ? 5.5 : 4.8)}
            y={down ? y : y + 1}
            width={down ? 11 : 9.6}
            height={215.5 - y - (down ? 0 : 1)}
            fill={down ? GREEN : '#fff'}
            stroke={down ? 'none' : CANDLE_RED}
            strokeWidth="2.400"
          />
        );
      })}
      <g fill="none" strokeWidth="2.800" strokeLinejoin="round">
        <polyline points={line(vma1, volY)} stroke="#e8c233" />
        <polyline points={line(vma2, volY)} stroke="#c438cc" />
        <polyline points={line(vma3, volY)} stroke="#1f8a1f" />
      </g>
    </svg>
  );
}

function ChipChart() {
  return (
    <svg width="342" height="610" viewBox="0 0 342 610">
      <rect x="1" y="1" width="339" height="607" fill="none" stroke="#cacaca" strokeWidth="2" />
      {chips.map((w, i) => (
        <rect key={i} x="1" y={3.7 + i * 5.128} width={w / 3} height="3" fill={i < 9 ? '#66b35a' : '#cd5654'} />
      ))}
      <path d="M1 190h248" stroke="#4b82cf" strokeWidth="3" strokeDasharray="8 8" />
      <rect x="253" y="172" width="87" height="36" rx="6" fill="#84afe9" />
      <text x="297" y="200" fontSize="30" fill="#fff" textAnchor="middle">18.68</text>
    </svg>
  );
}

function ChartSection() {
  return (
    <Charts>
      <KlineColumn>
        <KlineChart />
        <FloatingButtons $left={31}>
          <RoundButton>
            <svg width="30" height="32" viewBox="0 0 30 32" fill="none" stroke={ORANGE} strokeWidth="2.800">
              <path d="M17 1L2 16l15 15M27 1L12 16l15 15" />
            </svg>
          </RoundButton>
          <RoundButton>
            <svg width="34" height="34" viewBox="0 0 34 34" stroke={ORANGE} strokeWidth="3">
              <path d="M0 17h34" />
            </svg>
          </RoundButton>
          <RoundButton>
            <svg width="34" height="34" viewBox="0 0 34 34" stroke={ORANGE} strokeWidth="3">
              <path d="M0 17h34M17 0v34" />
            </svg>
          </RoundButton>
          <RoundButton>
            <Chevron w={17} h={32} color={ORANGE} left />
          </RoundButton>
        </FloatingButtons>
        <VolumeBar>
          <Picker $w={151}>
            成交量
            <Caret $w={7.5} $h={13} $gap={13} />
          </Picker>
          <VolumeValue $w={70} $color="#222">
            <span>145.4万<Arrow /></span>
          </VolumeValue>
          <VolumeValue $w={110} $color="#e8c233">
            <span>MA1:136.1万<Arrow down /></span>
          </VolumeValue>
          <VolumeValue $w={108} $color="#c438cc">
            <span>MA2:128.3万<Arrow /></span>
          </VolumeValue>
          <VolumeValue $w={110} $color="#1f8a1f">
            <span>MA3:127.8万<Arrow down /></span>
          </VolumeValue>
          <NextPane>
            <Chevron w={15} h={28} color="#fff" stroke={5} />
          </NextPane>
        </VolumeBar>
        <VolumeChart />
        <DateAxis>
          <svg width="681" height="16" viewBox="0 0 681 16" stroke="#777" strokeWidth="1.500">
            {volumes.map((_, i) =>
              i < 15 ? null : (
                <path
                  key={i}
                  d={`M${xAt(i) + 0.7} 0V${i === 25 || i === 55 ? 15 : 9}`}
                  strokeWidth={i === 25 || i === 55 ? 3 : 1.5}
                  opacity={Math.min(1, (i - 13) / 7)}
                />
              )
            )}
          </svg>
          <Dates>
            <span>20250509</span>
            <span>20250616</span>
            <span>20250728</span>
          </Dates>
        </DateAxis>
      </KlineColumn>
      <ChipColumn>
        <ChipChart />
        <FloatingButtons $left={41}>
          <RoundButton $grey>
            <Chevron w={18} h={32} color="#666" />
          </RoundButton>
          <RoundButton>
            <svg width="34" height="34" viewBox="0 0 34 34" fill="none" stroke={ORANGE} strokeWidth="3.600">
              <path d="M2 15V2h14M2 2l12 12M32 19v13H18M32 32L20 20" />
            </svg>
          </RoundButton>
        </FloatingButtons>
        <Legend>
          <LegendItem $color="#5cb845">套牢</LegendItem>
          <LegendItem $color="#e84a4a">获利</LegendItem>
          <LegendItem $color="#3480e2">平均</LegendItem>
        </Legend>
        <StatRow>获利比例:<b>97.72%</b></StatRow>
        <StatRow>平均成本:<b>18.68</b></StatRow>
        <StatRow>90%成本:<b>12.02-20.84</b></StatRow>
        <StatRow>集中度:<b>26.84%</b></StatRow>
        <StatRow $muted>
          <StatLabel>
            说明
            <InfoDot>i</InfoDot>
          </StatLabel>
          <b>2025-07-28</b>
        </StatRow>
      </ChipColumn>
    </Charts>
  );
}

function PromoBanner() {
  return (
    <Banner>
      <svg width="47" height="40" viewBox="0 0 47 40" fill="#ea5504">
        <path d="M1 13h4v14H1zM10 12L46 0v40l-9-4q-3 3-8 1-4-2-4-5L10 28z" />
      </svg>
      <Marquee>
        <span>严控回撤，增强收益弹性&gt;</span>
        <span>模型强化</span>
      </Marquee>
      <BannerRule />
      <Cross size={33} width={2.6} color={ORANGE} />
    </Banner>
  );
}

const sections = ['股吧', '盘口', '资讯', '公告', '研报', '财务', '资料'];

function BottomSection() {
  return (
    <BottomBar>
      <IndexBlock>
        <IndexArrow />
        <IndexValue>10962.15</IndexValue>
        <IndexRow>
          交运设备<span>0.52%</span>
        </IndexRow>
      </IndexBlock>
      <BottomItem>
        <svg width="66" height="60" viewBox="0 0 66 60" fill="none" stroke="#666" strokeWidth="3">
          <path d="M17 7.300A28 28 0 0 1 57 44.700L64.300 40M50.300 52.300A28 28 0 0 1 9.300 16.300L1 20" strokeLinejoin="round" />
          <path d="M23 17.300l9.700 9.400 9.300-9.400M32.700 27v18M22 27.700h21M22 36.300h21" />
        </svg>
        交易
      </BottomItem>
      <BottomItem>
        <svg width="60" height="60" viewBox="0 0 60 60" fill="none" stroke="#666" strokeWidth="3.200">
          <path d="M41 4.500H13Q5 4.500 5 12.500v34q0 8 8 8h34q8 0 8-8V19" />
          <path d="M21 39l3-9L44 10l5.500 5.500L30 35z" fill="#666" stroke="none" />
          <path d="M51.500 8l2-2" strokeWidth="6.500" strokeLinecap="round" />
        </svg>
        发帖
      </BottomItem>
      <BottomItem>
        <svg width="60" height="60" viewBox="0 0 60 60" fill="none" stroke="#666" strokeWidth="3">
          <rect x="6" y="6" width="21" height="21" rx="3" />
          <rect x="6" y="33" width="21" height="21" rx="3" />
          <rect x="33" y="33" width="21" height="21" rx="3" />
          <rect x="35" y="7.500" width="17" height="17" rx="2.500" transform="rotate(45 43.500 16)" />
        </svg>
        功能
      </BottomItem>
      <BottomItem>
        <svg width="60" height="60" viewBox="0 0 60 60" fill="none" stroke="#666" strokeWidth="3">
          <circle cx="30" cy="30" r="26.500" />
          <g fill="#666" stroke="none">
            <circle cx="18.500" cy="30" r="3" />
            <circle cx="30" cy="30" r="3" />
            <circle cx="41.500" cy="30" r="3" />
          </g>
        </svg>
        设自选
      </BottomItem>
    </BottomBar>
  );
}

export default function App() {
  return (
    <Page>
      <GlobalStyle />
      <StatusSection />
      <HeaderSection />
      <QuoteSection />
      <NoticeSection />
      <PeriodTabs />
      <IndicatorBar>
        <Picker $w={108}>
          均线
          <Caret $w={7} $h={12} $gap={3} />
        </Picker>
        <MaValue $w={204} $gap={14} $color="#222">MA5:19.80<Arrow /></MaValue>
        <MaValue $w={170} $gap={12} $color="#f3bb4e">10:19.18<Arrow /></MaValue>
        <MaValue $w={170} $gap={12} $color="#b8147c">20:18.47<Arrow /></MaValue>
        <Picker $w={127} $gap={60}>
          DK点
          <CornerMark />
        </Picker>
        <AdjustButton $w={132}>不复权</AdjustButton>
      </IndicatorBar>
      <ChartSection />
      <PromoBanner />
      <SectionTabs>
        {sections.map((name, i) => (
          <Tab key={name} $w={146.3} $active={i === 0} $bold={i === 0}>{name}</Tab>
        ))}
      </SectionTabs>
      <Cards>
        <Card $tone="blue">
          <CardIcon $bg="linear-gradient(#4f78e4, #7ba4f0)">企</CardIcon>
          <CardTitle>内蒙一机</CardTitle>
          <CardNote>42.8万关注</CardNote>
          <CardArrow $gap={18} width="14" height="28" viewBox="0 0 14 28" fill="none" stroke="#999" strokeWidth="2.500">
            <path d="M2 2l10 12L2 26" />
          </CardArrow>
        </Card>
        <Card>
          <CardIcon $bg="linear-gradient(#e04444, #f08a80)">
            <svg width="28" height="28" viewBox="0 0 28 28" fill="#fff">
              <path d="M0 10h7v16H0zM9 2h10v24H9zM21 14h7v12h-7z" />
              <path d="M12.500 10l2-1.500V18" fill="none" stroke="#e05550" strokeWidth="2" />
            </svg>
          </CardIcon>
          <CardTitle>股票人气榜</CardTitle>
          <CardArrow $gap={25} width="14" height="28" viewBox="0 0 14 28" fill="none" stroke="#999" strokeWidth="2.500">
            <path d="M2 2l10 12L2 26" />
          </CardArrow>
        </Card>
      </Cards>
      <BottomSection />
      <NavBar>
        <svg width="46" height="50" viewBox="0 0 46 50" fill="none" stroke="#cfcfcf" strokeWidth="4" strokeLinejoin="round">
          <path d="M42 3v43L5 24.500z" />
        </svg>
        <svg width="48" height="50" viewBox="0 0 48 50" fill="none" stroke="#cfcfcf" strokeWidth="4">
          <circle cx="24" cy="24.500" r="21.500" />
        </svg>
        <svg width="46" height="50" viewBox="0 0 46 50" fill="none" stroke="#cfcfcf" strokeWidth="4">
          <rect x="3" y="4.500" width="39" height="39" rx="2" />
        </svg>
      </NavBar>
    </Page>
  );
}
